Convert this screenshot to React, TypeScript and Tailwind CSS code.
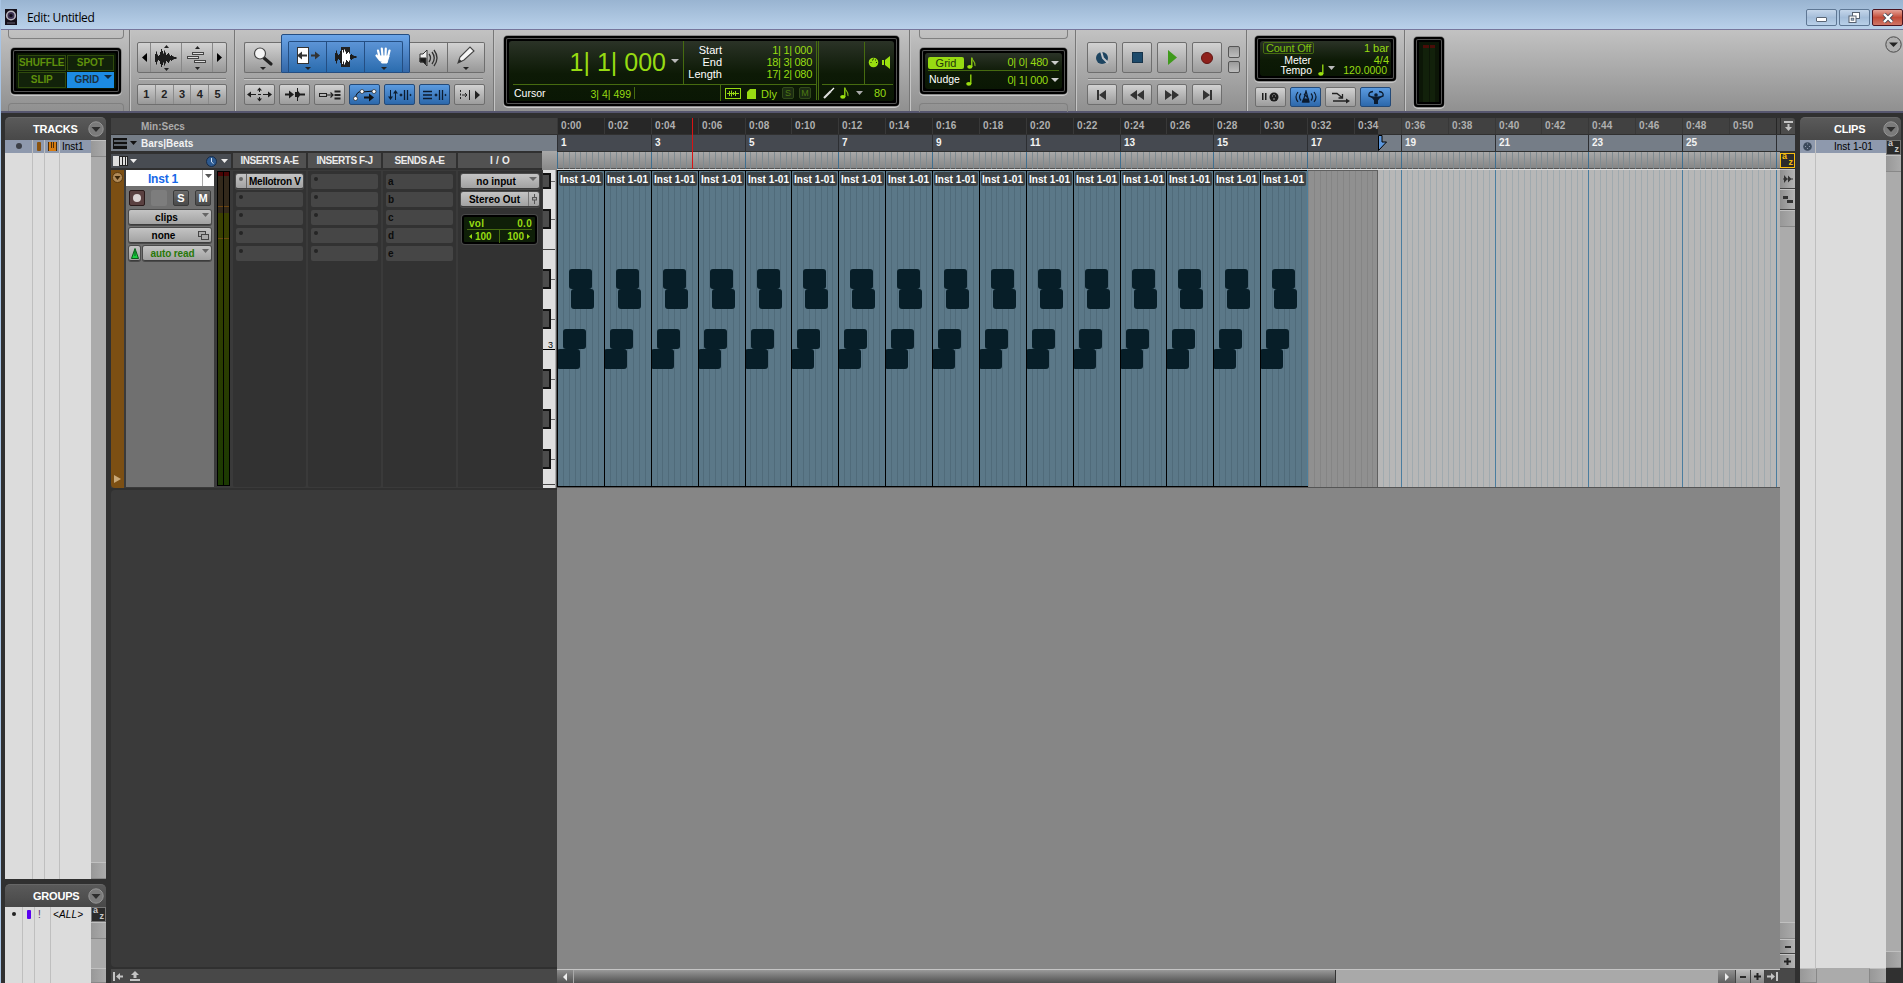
import React from 'react';

const BAR = 46.875;
const CLIP_COUNT = 16;
const TOTAL_BARS = 26;
const SELECTION_END = 821;

const LCD_OUTER =
  'rounded-[4px] bg-black p-[5px] shadow-[0_0_0_1px_#8a8a8a,0_1px_0_1px_#c9c9c9,inset_0_0_0_2px_#000,inset_0_0_0_3px_#555]';
const LCD_INNER = 'rounded-[3px] bg-linear-to-b from-[#2b3327] via-[#0d1a06] via-55% to-[#0a1704] overflow-hidden';
const BTN = 'border border-[#6e6e6e] rounded-[2px] bg-linear-to-b from-[#d2d2d2] to-[#9c9c9c] flex items-center justify-center';
const BTN_BLUE = 'border border-[#244a78] rounded-[2px] bg-linear-to-b from-[#5b9be0] to-[#2c68ab] flex items-center justify-center';
const PILL = 'rounded-[2px] border-b border-[#3c3c3c] bg-linear-to-b from-[#c4c4c4] to-[#a2a2a2] text-black shadow-[0_0_0_1px_#4a4a4a]';

function Tri({ w = 7, h = 4, color = '#222', dir = 'down' }: { w?: number; h?: number; color?: string; dir?: 'down' | 'up' | 'left' | 'right' }) {
  const points = {
    down: `0,0 ${w},0 ${w / 2},${h}`,
    up: `0,${h} ${w},${h} ${w / 2},0`,
    left: `${w},0 ${w},${h} 0,${h / 2}`,
    right: `0,0 0,${h} ${w},${h / 2}`,
  }[dir];
  return (
    <svg width={w} height={h} className="block shrink-0">
      <polygon points={points} fill={color} />
    </svg>
  );
}

function Groove({ className }: { className: string }) {
  return <div className={`h-[2px] border-t border-[#7d7d7d] bg-[#c6c6c6] ${className}`} />;
}

function CircleMenu({ size = 16 }: { size?: number }) {
  return (
    <svg width={size} height={size} viewBox="0 0 16 16" className="block shrink-0">
      <circle cx="8" cy="8" r="7.2" fill="#7b7b7b" stroke="#969696" strokeWidth="1" />
      <polygon points="3.5,6 12.5,6 8,11" fill="#2e2e2e" />
    </svg>
  );
}

function Note({ eighth = false }: { eighth?: boolean }) {
  return (
    <svg width="10" height="12" className="block shrink-0">
      <ellipse cx="2.8" cy="9.8" rx="2.6" ry="1.9" fill="#9be010" />
      <path d="M4.8 10V0.5" stroke="#9be010" strokeWidth="1.3" />
      {eighth && <path d="M5 1c0 3 4 3.5 3 8" stroke="#7fb418" strokeWidth="1.2" fill="none" />}
    </svg>
  );
}

function Waveform({ cut = false }: { cut?: boolean }) {
  const heights = [8, 13, 7, 4, 6, 12, 18, 14, 9, 15, 11, 6, 8, 10, 7, 4, 6, 4, 3, 2, 2, 1];
  return (
    <svg width="24" height="20" className="block">
      {cut && <rect x="7" y="0" width="9" height="20" fill="#222" />}
      {heights.map((h, i) => (
        <rect key={i} x={i + 1} y={10 - h / 2} width="1" height={h} fill={cut && i > 6 && i < 15 ? '#fff' : '#1c1c1c'} />
      ))}
    </svg>
  );
}

function AzIcon({ yellow = false }: { yellow?: boolean }) {
  return (
    <div
      className={`flex h-[15px] w-[15px] shrink-0 justify-between border bg-[#2b2b2b] px-px text-[9px] font-bold leading-[9px] ${
        yellow ? 'border-[#f5bd10] text-[#f5bd10]' : 'border-[#777] text-[#c8c8c8]'
      }`}
    >
      <span className="-mt-[2px] self-start">a</span>
      <span className="self-end">z</span>
    </div>
  );
}

function TitleBar() {
  return (
    <div className="flex h-[30px] shrink-0 items-start border-b border-[#77779c] bg-linear-to-b from-[#99b4d1] to-[#b9d1ea]">
      <svg width="12" height="16" className="ml-[4px] mt-[9px]">
        <rect width="12" height="16" fill="#15101a" />
        <circle cx="6" cy="6.5" r="4.3" fill="#3b3050" stroke="#b7b3bd" strokeWidth="1.6" />
        <circle cx="6" cy="6.5" r="1.6" fill="#0c0812" />
        <path d="M2 14h8" stroke="#67606e" />
      </svg>
      <div className="ml-[10px] mt-[9px] font-['Open_Sans',sans-serif] text-[12px] leading-[17px] tracking-[-0.35px] text-black">Edit: Untitled</div>
      <div className="ml-auto mt-[9px] flex gap-[2px]">
        <div className="flex h-[17px] w-[31px] items-center justify-center rounded-[2px] border border-[#5e7794] bg-linear-to-b from-[#c5d6ea] via-[#a4bdd9] to-[#b8d0e8]">
          <div className="mt-1 h-[5px] w-[11px] rounded-[1px] border border-[#5a6675] bg-white" />
        </div>
        <div className="flex h-[17px] w-[31px] items-center justify-center rounded-[2px] border border-[#5e7794] bg-linear-to-b from-[#c5d6ea] via-[#a4bdd9] to-[#b8d0e8]">
          <svg width="13" height="12">
            <rect x="4.5" y="0.5" width="7" height="6" fill="#fff" stroke="#56616f" />
            <rect x="1" y="4" width="7" height="6.5" fill="#fff" stroke="#56616f" />
            <rect x="3.2" y="6.2" width="2.6" height="2" fill="#a4bdd9" stroke="#56616f" strokeWidth=".8" />
          </svg>
        </div>
        <div className="flex h-[17px] w-[31px] items-center justify-center rounded-[2px] border border-[#4b1420] bg-linear-to-b from-[#e5a196] via-[#c14b38] to-[#cf7566]">
          <svg width="12" height="10">
            <path d="M2 1l8 8M10 1l-8 8" stroke="#4a4a55" strokeWidth="4" />
            <path d="M2 1l8 8M10 1l-8 8" stroke="#fff" strokeWidth="2.4" />
          </svg>
        </div>
      </div>
    </div>
  );
}

function EditModes() {
  return (
    <div className="flex w-[129px] flex-col border-r border-[#777] pl-[7px] shadow-[1px_0_0_#c4c4c4]">
      <div className="h-[9px] w-[116px] rounded-b-[4px] border border-t-0 border-[#808080]" />
      <div className={`ml-[3px] mt-[9px] h-[46px] w-[110px] ${LCD_OUTER}`}>
        <div className="grid h-[36px] grid-cols-2 gap-px rounded-[2px] bg-[#0a1704] p-[2px] text-center text-[10px] font-bold leading-[15px] tracking-[-0.1px] text-[#5f900c]">
          <div className="border border-[#2f4a0d] bg-[#12220a] leading-[14px]">SHUFFLE</div>
          <div className="border border-[#2f4a0d] bg-[#12220a] leading-[14px]">SPOT</div>
          <div className="border border-[#2f4a0d] bg-[#12220a] leading-[14px]">SLIP</div>
          <div className="flex bg-[#1c8be2] pl-[8px] text-[#1c3140]">
            GRID
            <span className="ml-[5px] mt-[3px]">
              <Tri w={8} h={4} color="#10293c" />
            </span>
          </div>
        </div>
      </div>
      <div className="mt-[9px] h-[9px] w-[116px] rounded-t-[4px] border border-b-0 border-[#808080]" />
    </div>
  );
}

function ZoomPresets() {
  return (
    <div className="w-[105px] border-r border-[#777] pl-[7px] pt-[12px] shadow-[1px_0_0_#c4c4c4]">
      <div className="flex h-[31px] w-[90px] overflow-hidden rounded-[2px] border border-[#6e6e6e] bg-linear-to-b from-[#d2d2d2] to-[#989898]">
        <div className="flex w-[13px] items-center justify-center border-r border-[#888]">
          <Tri w={5} h={9} dir="left" color="#000" />
        </div>
        <div className="flex w-[31px] flex-col items-center justify-center border-r border-[#888]">
          <Tri w={5} h={3} dir="up" />
          <Waveform />
          <Tri w={5} h={3} />
        </div>
        <div className="flex w-[31px] flex-col items-center justify-center border-r border-[#888]">
          <Tri w={5} h={3} dir="up" />
          <svg width="20" height="18" fill="#ddd" stroke="#444">
            <rect x="5.5" y="3.5" width="11" height="2" />
            <rect x="0.5" y="7.5" width="11" height="2" />
            <rect x="7.5" y="11.5" width="11" height="2" />
          </svg>
          <Tri w={5} h={3} />
        </div>
        <div className="flex flex-1 items-center justify-center">
          <Tri w={5} h={9} dir="right" color="#000" />
        </div>
      </div>
      <Groove className="ml-[2px] mt-[5px] w-[87px]" />
      <div className="mt-[4px] flex h-[21px] w-[90px] rounded-[2px] border border-[#6e6e6e] bg-linear-to-b from-[#cdcdcd] to-[#989898]">
        {[1, 2, 3, 4, 5].map((n) => (
          <div key={n} className="flex-1 border-r border-[#8a8a8a] text-center text-[11px] font-bold leading-[19px] text-[#222] last:border-r-0">
            {n}
          </div>
        ))}
      </div>
    </div>
  );
}

function Tools() {
  const blueCell = 'flex w-[38px] flex-col items-center justify-end border-l border-[#244e82] pb-[2px]';
  return (
    <div className="w-[259px] border-r border-[#777] pl-[9px] pt-[4px] shadow-[1px_0_0_#c4c4c4]">
      <div className="flex h-[39px] items-end">
        <div className="flex h-[31px] w-[37px] flex-col items-center justify-end rounded-l-[2px] border border-r-0 border-[#6e6e6e] bg-linear-to-b from-[#d2d2d2] to-[#989898] pb-[2px]">
          <svg width="22" height="21">
            <path d="M12 12l7 6" stroke="#222" strokeWidth="3.2" strokeLinecap="round" />
            <circle cx="8" cy="7.5" r="5.5" fill="#f4f4f4" stroke="#444" strokeWidth="1.2" />
          </svg>
          <Tri w={6} h={3} />
        </div>
        <div className="flex h-[39px] w-[129px] items-end justify-center rounded-t-[2px] border border-[#244e82] bg-linear-to-b from-[#6ba5e8] to-[#3468a8]">
          <div className="flex h-[31px] rounded-t-[2px] border-r border-t border-[#244e82] bg-linear-to-b from-[#5c94d6] to-[#2a6cae]">
            <div className={blueCell}>
              <svg width="26" height="21">
                <rect x="2.5" y="1.5" width="11" height="16" fill="#fff" stroke="#333" />
                <path d="M2 9.5l5-4v3h5v2H7v3z" fill="#333" />
                <path d="M25 9.5l-5-4v3h-4v2h4v3z" fill="#333" />
              </svg>
              <Tri w={6} h={3} />
            </div>
            <div className={`${blueCell} pb-[5px]`}>
              <Waveform cut />
            </div>
            <div className={blueCell}>
              <svg width="18" height="21" stroke="#fff" strokeLinecap="round" fill="#fff">
                <path d="M5 13L3 4.5M7.5 10L6.8 2.5M10.5 10L10.8 2.5M13 11L14.5 4.5M5 14L1.5 9.5" strokeWidth="2.2" />
                <path d="M4 10h10l-2 7H7z" />
              </svg>
              <Tri w={6} h={3} />
            </div>
          </div>
        </div>
        <div className="flex h-[31px] w-[38px] items-center justify-center border-y border-r border-[#6e6e6e] bg-linear-to-b from-[#d2d2d2] to-[#989898]">
          <svg width="20" height="20" fill="none" stroke="#333">
            <path d="M1 6h3l4-4v16l-4-4H1z" fill="#f0f0f0" stroke="#333" />
            <path d="M1 10h6v7l-3-3H1z" fill="#1a1a1a" />
            <path d="M10 6q3 4 0 8M13 4q4.5 6 0 12M15 2q6 8 0 16" strokeWidth="1.3" />
          </svg>
        </div>
        <div className="flex h-[31px] w-[37px] flex-col items-center justify-end rounded-r-[2px] border border-l-0 border-[#6e6e6e] bg-linear-to-b from-[#d2d2d2] to-[#989898] pb-[2px]">
          <svg width="20" height="21">
            <path d="M2 17l2-6L14 1l4 4L8 14z" fill="#f6f6f6" stroke="#444" strokeWidth="1.1" />
            <path d="M2 17l1.5-4 2.5 2.5z" fill="#333" />
          </svg>
          <Tri w={6} h={3} />
        </div>
      </div>
      <Groove className="mt-[5px] w-[239px]" />
      <div className="mt-[4px] flex gap-[4px]">
        <div className={`h-[21px] w-[31px] ${BTN}`}>
          <svg width="27" height="15" stroke="#1c1c1c" fill="#1c1c1c">
            <path d="M3 7.5h7M17 7.5h7M13.5 3v2M13.5 10v2M12 7.5h3" />
            <path d="M1 7.5l4-3v6zM26 7.5l-4-3v6zM13.5 0.5l2.5 3h-5zM13.5 14.5l2.5-3h-5z" stroke="none" />
          </svg>
        </div>
        <div className={`h-[21px] w-[31px] ${BTN}`}>
          <svg width="22" height="15" fill="#1c1c1c">
            <path d="M1 6.5h4v-3l5 4-5 4v-3H1z" />
            <path d="M13 1h1v3l2 2.5h5v2h-5L14 11v3h-1v-4h-2V5h2z" />
          </svg>
        </div>
        <div className={`h-[21px] w-[31px] ${BTN}`}>
          <svg width="22" height="14" fill="none" stroke="#222">
            <rect x="0.5" y="5.5" width="7" height="3" />
            <path d="M8 7h6M11.5 4.5l2.5 2.5-2.5 2.5" strokeWidth="1.2" />
            <path d="M15.5 3.5h6M15.5 7h6M15.5 10.5h6" strokeWidth="2" />
          </svg>
        </div>
        <div className={`h-[21px] w-[31px] ${BTN_BLUE}`}>
          <svg width="26" height="16">
            <path d="M3 12Q5 3 10 5L22 4" stroke="#111" fill="none" />
            <circle cx="3.5" cy="11.5" r="2" fill="#fff" stroke="#222" strokeWidth=".7" />
            <circle cx="10" cy="4.5" r="2" fill="#fff" stroke="#222" strokeWidth=".7" />
            <circle cx="22" cy="4.5" r="2" fill="#fff" stroke="#222" strokeWidth=".7" />
            <path d="M12 9.5h5v-3l5 4-5 4v-3h-5z" fill="#111" />
          </svg>
        </div>
        <div className={`h-[21px] w-[31px] ${BTN_BLUE}`}>
          <svg width="25" height="14" stroke="#0c1c30" fill="#0c1c30">
            <path d="M3.5 2v9M8.5 3v9" />
            <path d="M1 8.5l2.5 3.5L6 8.5zM6 5.5L8.5 2 11 5.5z" stroke="none" />
            <path d="M17.5 2v10M20.5 2v10" strokeWidth="1.3" />
            <circle cx="14" cy="7" r="1" />
            <circle cx="23.5" cy="7" r=".6" />
          </svg>
        </div>
        <div className={`h-[21px] w-[31px] ${BTN_BLUE}`}>
          <svg width="25" height="14" stroke="#0c1c30" fill="#0c1c30">
            <path d="M1 3.5h9M1 7h9M1 10.5h9" strokeWidth="1.4" />
            <path d="M17.5 2v10M20.5 2v10" strokeWidth="1.3" />
            <circle cx="14" cy="7" r="1" />
            <circle cx="23.5" cy="7" r=".6" />
          </svg>
        </div>
        <div className={`h-[21px] w-[31px] ${BTN}`}>
          <svg width="22" height="14" stroke="#222" fill="#222">
            <path d="M1.5 2v10" strokeDasharray="2 1.5" />
            <path d="M3 7h5M6 5l2 2-2 2M10.5 2v10" fill="none" />
            <path d="M16 2.5l5 4.5-5 4.5z" stroke="none" />
          </svg>
        </div>
      </div>
    </div>
  );
}

function MainCounter() {
  const selection = [
    ['Start', '1| 1| 000'],
    ['End', '18| 3| 080'],
    ['Length', '17| 2| 080'],
  ];
  return (
    <div className="w-[416px] border-r border-[#777] pl-[10px] pt-[6px] shadow-[1px_0_0_#c4c4c4]">
      <div className={`h-[70px] w-[395px] ${LCD_OUTER}`}>
        <div className={`flex h-[60px] text-[11px] text-[#97db12] ${LCD_INNER}`}>
          <div className="ml-[4px] w-[303px]">
            <div className="flex h-[44px] border-b border-[#466b10]">
              <div className="flex w-[171px] items-center justify-end border-r border-[#466b10] pr-[4px]">
                <span className="mr-px mt-[-1px] whitespace-pre text-[25px] leading-none">1| 1| 000</span>
                <span className="ml-[4px] mt-[-4px]">
                  <Tri w={8} h={4} color="#b9b9b9" />
                </span>
              </div>
              <div className="flex-1 pr-[4px] pt-[3px]">
                {selection.map(([label, value]) => (
                  <div key={label} className="flex h-[12px] items-center justify-between leading-[12px]">
                    <span className="w-[38px] text-right text-white">{label}</span>
                    <span className="tracking-[-0.3px]">{value}</span>
                  </div>
                ))}
              </div>
            </div>
            <div className="flex h-[16px] items-center">
              <span className="mt-[2px] w-[62px] pl-px text-[10.5px] text-white">Cursor</span>
              <span className="h-[12px] w-[60px] border-r border-[#466b10] pr-[3px] text-right text-[10.5px] leading-[15px]">3| 4| 499</span>
              <span className="ml-[85px] h-full w-px bg-[#466b10]" />
              <svg width="16" height="11" className="ml-[4px] mt-px" stroke="#97db12" fill="none">
                <rect x=".5" y=".5" width="15" height="10" />
                <path d="M2 5.5h12M4.5 3v5M6.5 2.5v6M8.5 4v3M10.5 3v5" />
              </svg>
              <svg width="9" height="10" className="ml-[6px] mt-px">
                <path d="M3 0h6v10H0V3z" fill="#97db12" />
              </svg>
              <span className="ml-[5px] mt-[2px] text-[11px]">Dly</span>
              <span className="ml-[5px] h-[12px] w-[12px] rounded-[2px] border border-[#31491a] bg-[#1b2b12] text-center text-[9px] leading-[10px] text-[#4d7a12]">S</span>
              <span className="ml-[5px] h-[12px] w-[12px] rounded-[2px] border border-[#31491a] bg-[#1b2b12] text-center text-[9px] leading-[10px] text-[#4d7a12]">M</span>
            </div>
          </div>
          <div className="h-[59px] w-[3px] border-x border-[#466b10]" />
          <div className="ml-[3px] w-[71px]">
            <div className="flex h-[44px] items-center border-b border-[#466b10]">
              <div className="h-[42px] w-[43px] border-r border-[#466b10]" />
              <svg width="11" height="11" className="ml-[3px]">
                <circle cx="5.5" cy="5.5" r="4.8" fill="#9be010" />
                <path d="M2.5 5.5h1M4 3h1M7 3h1M8 5.5h1M5 2h1" stroke="#16240c" />
              </svg>
              <svg width="10" height="13" className="ml-[3px]" fill="#9be010">
                <path d="M0 4h2v5H0zM3 4l5-4v13L3 9z" />
              </svg>
            </div>
            <div className="flex h-[16px] items-center">
              <svg width="12" height="12" className="ml-px">
                <path d="M1 11L8 4" stroke="#ddd" strokeWidth="2.2" />
                <path d="M8 4l3-3" stroke="#fff" strokeWidth="1.2" />
              </svg>
              <span className="ml-[5px]">
                <Note eighth />
              </span>
              <span className="ml-[6px]">
                <Tri w={7} h={4} color="#aaa" />
              </span>
              <span className="ml-[11px] mt-px">80</span>
            </div>
          </div>
        </div>
      </div>
    </div>
  );
}

function GridNudge() {
  return (
    <div className="w-[166px] border-r border-[#777] pl-[9px] shadow-[1px_0_0_#c4c4c4]">
      <div className="h-[9px] w-[149px] rounded-b-[4px] border border-t-0 border-[#808080]" />
      <div className={`ml-px mt-[9px] h-[46px] w-[147px] ${LCD_OUTER}`}>
        <div className={`h-[36px] pl-[3px] pr-[3px] pt-[2px] text-[11px] text-[#97db12] ${LCD_INNER}`}>
          <div className="flex h-[16px] items-center border-b border-[#466b10]">
            <span className="h-[12px] w-[36px] rounded-[2px] bg-[#97db12] text-center leading-[12px] text-[#22350b]">Grid</span>
            <span className="ml-[3px]">
              <Note eighth />
            </span>
            <span className="ml-auto tracking-[-0.2px]">0| 0| 480</span>
            <span className="ml-[3px]">
              <Tri w={8} h={4} color="#ccc" />
            </span>
          </div>
          <div className="flex h-[18px] items-center">
            <span className="w-[36px] pl-px text-[10.5px] text-white">Nudge</span>
            <span className="ml-[2px]">
              <Note />
            </span>
            <span className="ml-auto tracking-[-0.2px]">0| 1| 000</span>
            <span className="ml-[3px]">
              <Tri w={8} h={4} color="#ccc" />
            </span>
          </div>
        </div>
      </div>
      <div className="mt-[9px] h-[9px] w-[149px] rounded-t-[4px] border border-b-0 border-[#808080]" />
    </div>
  );
}

function Transport() {
  const seek = ['M2 1h2v10H2zM11 1v10L4 6z', 'M7 1v10L0 6zM14 1v10L7 6z', 'M0 1v10l7-5zM7 1v10l7-5z', 'M3 1v10l7-5zM10 1h2v10h-2z'];
  const box = 'h-[12px] w-[12px] rounded-[2px] border border-[#555] bg-linear-to-b from-[#9a9a9a] to-[#bdbdbd]';
  return (
    <div className="flex w-[171px] border-r border-[#777] pl-[11px] pt-[12px] shadow-[1px_0_0_#c4c4c4]">
      <div>
        <div className="flex gap-[5px]">
          <div className={`h-[31px] w-[30px] ${BTN}`}>
            <svg width="14" height="14">
              <circle cx="7" cy="7" r="6" fill="#1d4460" />
              <path d="M6 0l2 7 5 5" stroke="#c0c4c8" strokeWidth="2" fill="none" />
            </svg>
          </div>
          <div className={`h-[31px] w-[30px] ${BTN}`}>
            <div className="h-[11px] w-[11px] border border-[#16334a] bg-[#1d4a6b]" />
          </div>
          <div className={`h-[31px] w-[30px] ${BTN}`}>
            <Tri w={9} h={15} dir="right" color="#3f9a1c" />
          </div>
          <div className={`h-[31px] w-[30px] ${BTN}`}>
            <div className="h-[12px] w-[12px] rounded-full border border-[#611512] bg-[#8f211c]" />
          </div>
        </div>
        <Groove className="ml-px mt-[5px] w-[133px]" />
        <div className="mt-[4px] flex gap-[5px]">
          {seek.map((d) => (
            <div key={d} className={`h-[21px] w-[30px] ${BTN}`}>
              <svg width="14" height="12" fill="#333">
                <path d={d} />
              </svg>
            </div>
          ))}
        </div>
      </div>
      <div className="ml-[6px] mt-[4px] space-y-[3px]">
        <div className={box} />
        <div className={box} />
      </div>
    </div>
  );
}

function TempoPanel() {
  return (
    <div className="w-[158px] border-r border-[#777] pl-[8px] pt-[6px] shadow-[1px_0_0_#c4c4c4]">
      <div className={`h-[45px] w-[141px] ${LCD_OUTER}`}>
        <div className={`h-[35px] pl-[3px] pr-[2px] pt-px text-[11px] leading-[11px] text-[#97db12] ${LCD_INNER}`}>
          <div className="flex h-[12px] justify-between">
            <span className="w-[51px] rounded-[2px] border border-[#466b10] text-center leading-[10px] tracking-[-0.2px] text-[#7fc010]">Count Off</span>
            <span className="leading-[13px]">1 bar</span>
          </div>
          <div className="flex h-[11px] justify-between leading-[12px]">
            <span className="w-[48px] text-right text-[10.5px] text-white">Meter</span>
            <span>4/4</span>
          </div>
          <div className="flex h-[11px] leading-[11px]">
            <span className="w-[49px] text-right text-[10.5px] text-white">Tempo</span>
            <span className="ml-[6px] mt-[-1px]">
              <Note />
            </span>
            <span className="mt-[1px]">
              <Tri w={7} h={4} color="#bbb" />
            </span>
            <span className="ml-auto mr-[2px] text-[10.5px]">120.0000</span>
          </div>
        </div>
      </div>
      <div className="mt-[6px] flex gap-[4px]">
        <div className={`h-[20px] w-[31px] ${BTN}`}>
          <svg width="17" height="12" fill="#1c1c1c">
            <path d="M0 2h1.5v7H0zM3 2h1.5v7H3z" />
            <circle cx="12" cy="6" r="4.5" />
            <path d="M10 5h1M13 5h1M11.5 3.5h1M11 8h2" stroke="#999" />
          </svg>
        </div>
        <div className={`h-[20px] w-[31px] ${BTN_BLUE}`}>
          <svg width="24" height="14" fill="none" stroke="#0c1c30" strokeWidth="1.2">
            <path d="M4 2q-4 5 0 10M7 3.5q-3 3.5 0 7M20 2q4 5 0 10M17 3.5q3 3.5 0 7" />
            <path d="M12 1l3 11H9zM10 4l4 4" />
            <path d="M9.5 9h5v3h-6z" fill="#0c1c30" />
          </svg>
        </div>
        <div className={`h-[20px] w-[31px] ${BTN}`}>
          <svg width="20" height="14" fill="none" stroke="#222" strokeWidth="1.3">
            <path d="M1 3.5h5l5 4M7.5 8h4V4M2 11h14" />
            <path d="M15 8.5l4 2.5-4 2.5z" fill="#222" stroke="none" />
          </svg>
        </div>
        <div className={`h-[20px] w-[31px] ${BTN_BLUE}`}>
          <svg width="18" height="14" fill="none" stroke="#0c1c30" strokeWidth="1.4">
            <path d="M6 1.5Q1 2 2 6l5 2M12 1.5Q17 2 16 6l-5 2" />
            <circle cx="9" cy="5" r="1.8" fill="#0c1c30" stroke="none" />
            <path d="M4 6.5h10l-3 4v3.5H7v-3.500z" fill="#0c1c30" stroke="none" />
          </svg>
        </div>
      </div>
    </div>
  );
}

function Toolbar() {
  return (
    <div className="flex h-[83px] shrink-0 border-b-2 border-[#56566e] bg-linear-to-b from-[#c2c2c2] to-[#909090]">
      <EditModes />
      <ZoomPresets />
      <Tools />
      <MainCounter />
      <GridNudge />
      <Transport />
      <TempoPanel />
      <div className={`ml-[9px] mt-[7px] h-[70px] w-[30px] ${LCD_OUTER}`}>
        <div className="flex h-full justify-center gap-px bg-[#0c1607] px-[4px] pt-[3px]">
          <div className="flex-1 border-t-[3px] border-[#4a0d08] bg-[#12210b]" />
          <div className="flex-1 border-t-[3px] border-[#4a0d08] bg-[#12210b]" />
        </div>
      </div>
      <div className="ml-auto mt-[6px] pr-[1px]">
        <svg width="17" height="17">
          <circle cx="8.5" cy="8.5" r="7.7" fill="#b0b0b0" stroke="#4a4a4a" />
          <polygon points="4,6.5 13,6.5 8.5,11" fill="#222" />
        </svg>
      </div>
    </div>
  );
}

function PanelHeader({ title, inset }: { title: string; inset: string }) {
  return (
    <div className="flex h-[23px] shrink-0 items-center rounded-t-[5px] border-t border-[#666] bg-linear-to-b from-[#5a5a5a] to-[#484848] text-[11px] font-bold text-white">
      <span className={`flex-1 tracking-[-0.2px] ${inset}`}>{title}</span>
      <span className="mr-[2px]">
        <CircleMenu />
      </span>
    </div>
  );
}

function Thumb({ className = '' }: { className?: string }) {
  return <div className={`shrink-0 border-y border-t-[#c0c0c0] border-b-[#888] bg-linear-to-r from-[#989898] to-[#ababab] ${className}`} />;
}

function Sidebar() {
  return (
    <div className="flex w-[101px] shrink-0 flex-col">
      <PanelHeader title="TRACKS" inset="pl-[28px]" />
      <div className="flex h-[739px] bg-[#dcdcdc]">
        <div className="flex w-[86px] text-[10px] text-black">
          <div className="w-[28px] border-r border-[#bfbfbf]">
            <div className="h-[13px] bg-[#8e99ad] pl-[11px] pt-[3px]">
              <div className="h-[6px] w-[6px] rounded-full bg-[#3c4048]" />
            </div>
          </div>
          <div className="w-[12px] border-r border-[#bfbfbf]">
            <div className="flex h-[13px] justify-center bg-[#8e99ad] pt-[2px]">
              <div className="h-[9px] w-[4px] rounded-[1px] bg-[#8a5310]" />
            </div>
          </div>
          <div className="w-[15px] border-r border-[#bfbfbf]">
            <div className="flex h-[13px] justify-center bg-[#8e99ad] pt-[2px]">
              <svg width="9" height="9" shapeRendering="crispEdges">
                <rect width="9" height="9" fill="#d87c10" />
                <path d="M3 0h1v6H3zM5 0h1v6H5zM0 0h1v9H0zM8 0h1v9H8z" fill="#4a2c08" />
              </svg>
            </div>
          </div>
          <div className="flex-1">
            <div className="h-[13px] bg-[#8e99ad] pl-[2px] leading-[14px]">Inst1</div>
          </div>
        </div>
        <div className="flex w-[15px] flex-col justify-between bg-[#ababab]">
          <Thumb className="h-[17px]" />
          <Thumb className="h-[17px]" />
        </div>
      </div>
      <div className="h-[5px]" />
      <PanelHeader title="GROUPS" inset="pl-[28px]" />
      <div className="flex flex-1 bg-[#dcdcdc]">
        <div className="flex w-[86px] text-[10px] text-black">
          <div className="w-[18px] border-r border-[#bfbfbf] pl-[7px] pt-[5px]">
            <div className="h-[4px] w-[4px] rounded-full bg-[#222]" />
          </div>
          <div className="w-[12px] border-r border-[#bfbfbf] pl-[4px] pt-[3px]">
            <div className="h-[9px] w-[4px] rounded-[1px] bg-[#5a00f0]" />
          </div>
          <div className="w-[16px] border-r border-[#bfbfbf] pl-[3px] leading-[16px] text-[#5a3070]">!</div>
          <div className="pl-[2px] italic leading-[16px] tracking-[0.15px]">&lt;ALL&gt;</div>
        </div>
        <div className="flex w-[15px] flex-col bg-[#ababab]">
          <AzIcon />
          <Thumb className="h-[17px]" />
          <Thumb className="mt-auto h-[15px]" />
        </div>
      </div>
    </div>
  );
}

function ClipsPanel() {
  return (
    <div className="ml-[5px] flex w-[101px] shrink-0 flex-col">
      <PanelHeader title="CLIPS" inset="pl-[34px]" />
      <div className="flex h-[828px]">
        <div className="flex w-[86px] bg-[#dcdcdc] text-[10px] text-black">
          <div className="w-[16px] border-r border-[#bfbfbf]">
            <div className="h-[13px] bg-[#8e99ad] pl-[3px] pt-[2px]">
              <svg width="9" height="9">
                <circle cx="4.5" cy="4.5" r="4.3" fill="#3c4a5c" />
                <path d="M2 4.5h1M6 4.5h1M4 2h1M4 6.5h1" stroke="#8e99ad" />
              </svg>
            </div>
          </div>
          <div className="flex-1">
            <div className="h-[13px] bg-[#8e99ad] pl-[18px] leading-[14px]">Inst 1-01</div>
          </div>
        </div>
        <div className="flex w-[15px] flex-col bg-[#ababab]">
          <AzIcon />
          <Thumb className="h-[17px]" />
          <Thumb className="mt-auto h-[17px]" />
        </div>
      </div>
      <div className="flex h-[15px] w-[86px] justify-between bg-[#ababab]">
        <Thumb className="w-[17px] border-r border-r-[#888]" />
        <Thumb className="w-[17px] border-l border-l-[#888]" />
      </div>
    </div>
  );
}

function TrackHeader() {
  const smallBtn = 'h-[16px] w-[16px] rounded-[2px] border border-[#3a3a3a] bg-linear-to-b from-[#6a6a6a] to-[#4a4a4a] text-center text-[11px] leading-[15px] text-white';
  return (
    <div className="w-[88px] bg-[#707070] text-[10px] font-bold">
      <div className="flex h-[16px] bg-white">
        <div className="w-[77px] border-r border-[#aaa] pr-[2px] text-center text-[12px] leading-[18px] tracking-[-0.2px] text-[#1668e8]">Inst 1</div>
        <div className="flex flex-1 justify-center pt-[4px]">
          <Tri w={7} h={4} color="#555" />
        </div>
      </div>
      <div className="flex gap-[6px] px-[3px] pt-[4px]">
        <div className="flex h-[16px] w-[16px] items-center justify-center rounded-[2px] border border-[#2a1a1a] bg-[#5a4040]">
          <div className="h-[8px] w-[8px] rounded-full bg-[#dcd4d4]" />
        </div>
        <div className="h-[16px] w-[16px] rounded-[2px] bg-[#7d7d7d]" />
        <div className={smallBtn}>S</div>
        <div className={smallBtn}>M</div>
      </div>
      <div className={`mx-[3px] mt-[4px] flex h-[15px] ${PILL}`}>
        <span className="flex-1 pl-[2px] text-center leading-[16px]">clips</span>
        <span className="mr-[2px] mt-[3px]">
          <Tri w={7} h={4} color="#666" />
        </span>
      </div>
      <div className={`mx-[3px] mt-[3px] flex h-[15px] ${PILL}`}>
        <span className="flex-1 text-center leading-[16px]">none</span>
        <svg width="12" height="10" className="mr-[1px] mt-[3px]" fill="#aaa" stroke="#444">
          <rect x=".5" y=".5" width="7" height="5" />
          <rect x="3.5" y="3.5" width="7" height="5" />
        </svg>
      </div>
      <div className="mx-[3px] mt-[3px] flex gap-[3px]">
        <div className={`flex h-[15px] w-[11px] items-center justify-center ${PILL}`}>
          <svg width="8" height="11">
            <path d="M4 .5L7.5 10.5h-7z" fill="#18d040" stroke="#0a5a18" />
            <path d="M4 3v5" stroke="#0a5a18" />
          </svg>
        </div>
        <div className={`flex h-[15px] flex-1 ${PILL}`}>
          <span className="flex-1 text-center leading-[16px] tracking-[-0.1px] text-[#287808]">auto read</span>
          <span className="mr-[2px] mt-[3px]">
            <Tri w={7} h={4} color="#666" />
          </span>
        </div>
      </div>
    </div>
  );
}

function TrackMeter() {
  const bar = (
    <div className="w-[5px] bg-linear-to-b from-[#3a4000] from-15% to-[#1c3a02]">
      <div className="h-[4px] bg-[#4a0505]" />
      <div className="h-[31px] border-b border-[#6a4410] bg-[#33291b]" />
      <div className="h-[6px] bg-[#33291b]" />
      <div className="h-[26px] border-b border-[#6a4a10]" />
    </div>
  );
  return (
    <div className="ml-[3px] mt-[1px] flex h-[315px] w-[13px] gap-px border border-black bg-black">
      {bar}
      {bar}
    </div>
  );
}

function Inserts({ plugin }: { plugin?: string }) {
  return (
    <div className="mr-[2px] mt-px h-[316px] w-[73px] space-y-[3px] rounded-b-[2px] bg-[#323232] px-[3px] pt-[3px]">
      {[0, 1, 2, 3, 4].map((i) =>
        plugin && i === 0 ? (
          <div key={i} className={`flex h-[15px] text-[10px] font-bold tracking-[-0.25px] ${PILL}`}>
            <span className="w-[11px] shrink-0 border-r border-[#666] pl-[3px] pt-[3px]">
              <span className="block h-[4px] w-[4px] rounded-full bg-[#666]" />
            </span>
            <span className="whitespace-nowrap pl-[2px] leading-[16px]">{plugin}</span>
          </div>
        ) : (
          <div key={i} className="h-[15px] rounded-[2px] bg-[#464646] pl-[3px] pt-[3px]">
            <div className="h-[4px] w-[4px] rounded-full bg-[#252525]" />
          </div>
        )
      )}
    </div>
  );
}

function TrackControls() {
  return (
    <div className="flex h-[318px]">
      <div className="flex w-[13px] flex-col items-center justify-between rounded-bl-[4px] bg-[#7c4f13] pb-[5px] pt-[2px]">
        <svg width="11" height="11">
          <circle cx="5.5" cy="5.5" r="5" fill="#b08a58" stroke="#5a3a10" />
          <polygon points="2.5,4 8.5,4 5.5,8" fill="#3a2508" />
        </svg>
        <Tri w={7} h={8} dir="right" color="#c8a878" />
      </div>
      <div className="ml-[2px] flex h-[317px]">
        <TrackHeader />
      </div>
      <TrackMeter />
      <div className="ml-[3px] flex">
        <Inserts plugin="Mellotron V" />
        <Inserts />
        <div className="mr-[2px] mt-px h-[316px] w-[73px] space-y-[3px] bg-[#323232] px-[3px] pt-[3px] text-[10px] font-bold">
          {['a', 'b', 'c', 'd', 'e'].map((s) => (
            <div key={s} className="h-[15px] rounded-[2px] bg-[#464646] pl-[2px] leading-[16px] text-[#0c0c0c]">
              {s}
            </div>
          ))}
        </div>
        <div className="mt-px h-[316px] w-[84px] bg-[#323232] px-[3px] pt-[3px] text-[10px] font-bold">
          <div className={`flex h-[15px] ${PILL}`}>
            <span className="flex-1 pl-[2px] text-center leading-[16px]">no input</span>
            <span className="mr-[2px] mt-[3px]">
              <Tri w={8} h={4} color="#666" />
            </span>
          </div>
          <div className={`mt-[3px] flex h-[15px] ${PILL}`}>
            <span className="flex-1 border-r border-[#777] text-center leading-[16px]">Stereo Out</span>
            <svg width="10" height="14" stroke="#555" fill="none">
              <path d="M5.5 2v10" />
              <rect x="3.5" y="5.5" width="4" height="2.5" fill="#aaa" />
            </svg>
          </div>
          <div className="ml-px mr-[2px] mt-[8px] h-[29px] rounded-[3px] border-2 border-black bg-[#0f1f08] px-[3px] pt-px text-[#97db12] shadow-[0_0_0_1px_#484848]">
            <div className="flex h-[12px] justify-between border-b border-[#466b10] leading-[11px]">
              <span className="pl-[2px] tracking-[0.3px]">vol</span>
              <span className="tracking-[0.3px]">0.0</span>
            </div>
            <div className="flex h-[13px] items-center">
              <div className="flex h-full w-[33px] items-center gap-[3px] border-r border-[#466b10] pl-[2px]">
                <Tri w={3} h={5} dir="left" color="#97db12" />
                100
              </div>
              <div className="flex flex-1 items-center justify-end gap-[3px] pr-[2px]">
                100
                <Tri w={3} h={5} dir="right" color="#97db12" />
              </div>
            </div>
          </div>
        </div>
      </div>
    </div>
  );
}

function Keyboard() {
  const blackKeys = [3, 39, 99, 139, 199, 239, 279];
  const stubs = [11, 49, 109, 149, 209, 249, 289];
  return (
    <svg width="14" height="318" className="ml-px block shrink-0" shapeRendering="crispEdges">
      <rect width="13" height="318" fill="#dfdfdf" />
      <rect x="12" width="1" height="318" fill="#aaa" />
      <rect x="13" width="1" height="318" fill="#555" />
      {[79, 179, 314].map((y) => (
        <rect key={y} y={y} width="12" height="1" fill={y === 179 ? '#000' : '#444'} />
      ))}
      {stubs.map((y) => (
        <rect key={y} x="8" y={y} width="4" height="1" fill="#666" />
      ))}
      {blackKeys.map((y, i) => (
        <g key={y}>
          <rect y={y} width="8" height={i === 0 ? 16 : 20} fill="#111" />
          <rect y={y + 2} width="6" height={i === 0 ? 12 : 16} fill="#4c4c4c" />
        </g>
      ))}
      <text x="5" y="178" fontSize="9" fontFamily="Liberation Sans" fill="#000">
        3
      </text>
    </svg>
  );
}

function LeftColumn() {
  const heading = 'h-[15px] bg-[#515151] text-center text-[10px] font-bold leading-[16px] text-[#ececec]';
  return (
    <div className="flex w-[446px] shrink-0 flex-col">
      <div className="mt-px h-[16px] bg-[#414141] pl-[30px] text-[10px] font-bold leading-[18px] text-[#ababab]">Min:Secs</div>
      <div className="mt-px flex h-[16px] items-center bg-[#757d87] text-[10px] font-bold text-[#f2f2f2]">
        <svg width="14" height="11" className="ml-[2px]" shapeRendering="crispEdges">
          <rect width="14" height="11" fill="#111" />
          <path d="M1 2h13v2H1zM1 6h13v2H1z" fill="#5c636b" />
        </svg>
        <span className="ml-[3px]">
          <Tri w={7} h={4} color="#111" />
        </span>
        <span className="ml-[4px] mt-px">Bars|Beats</span>
      </div>
      <div className="flex h-[19px]">
        <div className="mt-[3px] flex h-[14px] w-[120px] items-center bg-[#484c52]">
          <svg width="15" height="10" className="ml-[2px]" shapeRendering="crispEdges">
            <rect width="15" height="10" fill="#222" />
            <path d="M0 0h6v10H0zM7 1h2v8H7zM10 1h2v8h-2zM13 1h1v8h-1z" fill="#ddd" />
          </svg>
          <span className="ml-[2px]">
            <Tri w={7} h={4} color="#eee" />
          </span>
          <svg width="11" height="11" className="ml-auto">
            <circle cx="5.5" cy="5.5" r="5" fill="#2d5a90" stroke="#182c48" />
            <path d="M5.5 2v4l2 1.5" stroke="#cfe0f4" fill="none" />
          </svg>
          <span className="ml-[4px] mr-[3px]">
            <Tri w={7} h={4} color="#eee" />
          </span>
        </div>
        <div className={`ml-[2px] mt-[2px] w-[73px] tracking-[-0.45px] ${heading}`}>INSERTS A-E</div>
        <div className={`ml-[2px] mt-[2px] w-[73px] tracking-[-0.45px] ${heading}`}>INSERTS F-J</div>
        <div className={`ml-[2px] mt-[2px] w-[73px] tracking-[-0.45px] ${heading}`}>SENDS A-E</div>
        <div className={`ml-[2px] mt-[2px] w-[84px] tracking-[0.2px] ${heading}`}>I / O</div>
        <div className="flex-1 bg-linear-to-b from-[#a8a8a8] to-[#888]" />
      </div>
      <div className="flex bg-[#3a3a3a]">
        <TrackControls />
        <Keyboard />
      </div>
      <div className="mt-[2px] flex-1 rounded-l-[4px] bg-[#3a3a3a]" />
      <div className="mt-[2px] flex h-[14px] items-center gap-[7px] bg-[#484848] pl-[2px]">
        <svg width="10" height="9" fill="#c4c4c4">
          <path d="M0 0h2v9H0zM3 4.5L7 1v2.5h3v2H7V8z" />
        </svg>
        <svg width="10" height="10" fill="#c4c4c4">
          <path d="M0 8h10v2H0zM5 0l4 4H6.5v3h-3V4H1z" />
        </svg>
      </div>
    </div>
  );
}

interface GridLinesProps {
  bars?: number;
  height: number;
  minor: string;
  major: string;
}

function GridLines({ bars = TOTAL_BARS, height, minor, major }: GridLinesProps) {
  const lines = Array.from({ length: bars * 8 + 1 }, (_, i) => i);
  return (
    <svg width={Math.round(bars * BAR) + 1} height={height} className="absolute left-0 top-0" shapeRendering="crispEdges">
      {lines.map((i) => (
        <rect key={i} x={Math.round((i * BAR) / 8)} y="0" width="1" height={height} fill={i % 16 === 0 ? major : minor} />
      ))}
    </svg>
  );
}

function Clip({ index }: { index: number }) {
  const left = Math.round(index * BAR);
  const width = Math.round((index + 1) * BAR) - left;
  return (
    <div className="relative h-[317px] overflow-hidden border-y border-l border-black" style={{ width }}>
      <div className="mx-px mt-px h-[14px] overflow-hidden whitespace-nowrap rounded-[2px] bg-[#3c4347] pl-px text-[10px] font-bold leading-[15px] tracking-[0.05px] text-white">
        Inst 1-01
      </div>
      <div className="absolute left-[11px] top-[98px] h-[20px] w-[23px] rounded-[3px] bg-[#071e28]" />
      <div className="absolute left-[13px] top-[118px] h-[20px] w-[23px] rounded-[3px] bg-[#071e28]" />
      <div className="absolute left-[5px] top-[158px] h-[20px] w-[23px] rounded-[3px] bg-[#071e28]" />
      <div className="absolute -left-px top-[178px] h-[20px] w-[23px] rounded-[3px] bg-[#071e28]" />
    </div>
  );
}

function Rulers() {
  const seconds = Array.from({ length: TOTAL_BARS }, (_, i) => `0:${String(i * 2).padStart(2, '0')}`);
  const bars = Array.from({ length: TOTAL_BARS / 2 }, (_, i) => i * 2 + 1);
  return (
    <div className="text-[10px] font-bold">
      <div className="mt-px flex h-[16px] bg-[linear-gradient(to_right,#272727_821px,#414141_821px)] text-[#b0b0b0]">
        {seconds.map((s, i) => (
          <div
            key={s}
            className="shrink-0 border-l border-[#383838] pl-[3px] leading-[16px] tracking-[0.1px]"
            style={{ width: Math.round((i + 1) * BAR) - Math.round(i * BAR) }}
          >
            {s}
          </div>
        ))}
        <div className="flex-1 border-l border-[#262626]" />
      </div>
      <div className="relative mt-px flex h-[16px] bg-[linear-gradient(to_right,#454950_821px,#757d87_821px)] text-[#f4f4f4]">
        {bars.map((b, i) => (
          <div
            key={b}
            className="shrink-0 border-l border-[#2c2e32] pl-[3px] leading-[16px]"
            style={{ width: Math.round((i + 1) * BAR * 2) - Math.round(i * BAR * 2) }}
          >
            {b}
          </div>
        ))}
        <div className="flex-1 border-l border-[#2c2e32]" />
        {/* timeline end marker */}
        <svg width="10" height="17" className="absolute top-0" style={{ left: SELECTION_END }}>
          <path d="M.5 .5h3.5v6.5h4.5L.5 15.5z" fill="#5d97dc" stroke="#000" />
        </svg>
      </div>
    </div>
  );
}

function Timeline() {
  return (
    <div className="relative flex w-[1223px] shrink-0 flex-col">
      <Rulers />
      <div className="relative mt-px h-[17px] border-b border-[#555] bg-linear-to-b from-[#a9a9a9] to-[#868686]">
        <GridLines height={17} minor="#7f8b91" major="#3f6f90" />
      </div>
      <div className="h-px bg-[#e0e0e0]" />
      <div className="relative h-[318px] border-b border-[#555] bg-[#b7b7b7]">
        <GridLines height={317} minor="#a0aaaf" major="#4a7d9f" />
        <div className="relative flex h-[317px]">
          <div className="relative flex h-[317px] border-r border-black bg-[#5b7888]">
            <GridLines bars={CLIP_COUNT} height={316} minor="#506b7a" major="#4d7f9c" />
            {Array.from({ length: CLIP_COUNT }, (_, i) => (
              <Clip key={i} index={i} />
            ))}
          </div>
          <div className="relative h-[317px] w-[70px] overflow-hidden border-r border-t border-[#606060] bg-[#909090]">
            <GridLines bars={2} height={317} minor="#858585" major="#858585" />
          </div>
        </div>
      </div>
      <div className="flex-1 bg-[#868686]" />
      <div className="flex h-[14px] border-t border-[#c4c4c4] bg-[#a9a9a9]">
        <div className="flex w-[16px] items-center justify-center bg-linear-to-b from-[#8e8e8e] to-[#555]">
          <Tri w={4} h={8} dir="left" color="#eee" />
        </div>
        <div className="ml-px w-[762px] border-r border-[#333] bg-linear-to-b from-[#999] to-[#525252]" />
        <div className="ml-auto flex">
          <div className="flex w-[17px] items-center justify-center bg-linear-to-b from-[#909090] to-[#606060]">
            <Tri w={4} h={8} dir="right" color="#eee" />
          </div>
          <div className="flex w-[15px] items-center justify-center border-l border-[#444] bg-linear-to-b from-[#bbb] to-[#888]">
            <div className="h-[2px] w-[6px] bg-[#2a2a2a]" />
          </div>
          <div className="flex w-[15px] items-center justify-center border-x border-[#444] bg-linear-to-b from-[#bbb] to-[#888]">
            <svg width="7" height="7">
              <path d="M3.5 0v7M0 3.5h7" stroke="#222" strokeWidth="2" />
            </svg>
          </div>
          <div className="flex w-[15px] items-center justify-center bg-[#484848]">
            <svg width="11" height="9" fill="#c4c4c4">
              <path d="M9 0h2v9H9zM8 4.5L4 1v2.5H0v2h4V8z" />
            </svg>
          </div>
        </div>
      </div>
      {/* play cursor */}
      <div className="absolute left-[135px] top-px h-[51px] w-px bg-[#d81414]" />
    </div>
  );
}

function ZoomColumn() {
  const cell = 'flex shrink-0 items-center justify-center border-t border-b border-t-[#c4c4c4] border-b-[#444] bg-linear-to-r from-[#8e8e8e] to-[#b4b4b4]';
  return (
    <div className="flex w-[15px] shrink-0 flex-col">
      <div className="mt-px flex h-[16px] items-center justify-center rounded-tr-[3px] border-l border-[#2a2a2a] bg-[#4c4c4c]">
        <svg width="9" height="10" fill="#c4c4c4">
          <path d="M0 0h9v2H0zM3.5 3h2v3H8l-3.5 4L1 6h2.5z" />
        </svg>
      </div>
      <div className="mt-px h-[16px] bg-[#757d87]" />
      <div className="mt-[2px]">
        <AzIcon yellow />
      </div>
      <div className={`mt-px h-[20px] ${cell}`}>
        <svg width="10" height="8" fill="#333">
          <path d="M1 0l3.5 4L1 8zM5 0.5l3.5 3.5L5 7.5zM0 3.5h10v1H0z" />
        </svg>
      </div>
      <div className={`h-[21px] ${cell}`}>
        <svg width="10" height="7" fill="#333">
          <path d="M0 0h5v3H0zM4 4h6v3H4z" />
        </svg>
      </div>
      <div className="flex flex-1 flex-col justify-between bg-[#ababab]">
        <Thumb className="h-[17px]" />
        <Thumb className="h-[17px]" />
      </div>
      <div className={`h-[15px] ${cell}`}>
        <div className="h-[2px] w-[6px] bg-[#2a2a2a]" />
      </div>
      <div className={`h-[15px] ${cell}`}>
        <svg width="7" height="7">
          <path d="M3.5 0v7M0 3.5h7" stroke="#222" strokeWidth="2" />
        </svg>
      </div>
      <div className="h-[14px] bg-[#484848]" />
    </div>
  );
}

export default function App() {
  return (
    <div className="flex h-screen w-screen flex-col overflow-hidden border-l border-[#a8c4e4] bg-[#303030] font-['Liberation_Sans',sans-serif]">
      <TitleBar />
      <Toolbar />
      <div className="flex min-h-0 flex-1 pl-[4px] pt-[4px]">
        <Sidebar />
        <div className="ml-[5px] flex">
          <LeftColumn />
          <Timeline />
          <ZoomColumn />
        </div>
        <ClipsPanel />
      </div>
    </div>
  );
}
